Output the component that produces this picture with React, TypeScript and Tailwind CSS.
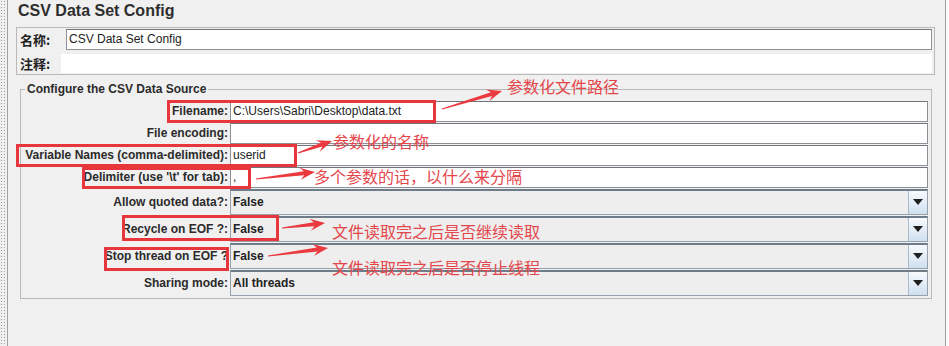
import React from 'react';

const labelFont = "font-['Liberation_Sans','Arial',sans-serif]";
const cjkFont = "font-['Noto_Sans_CJK_SC','Noto_Sans',sans-serif]";

const TextRow = ({ label, value }: { label: string; value?: string }) => (
  <div className="flex items-center h-[22px]">
    <div className={`w-[209px] pr-[2px] text-right text-[12px] font-bold text-[#2b2b2b] ${labelFont}`}>{label}</div>
    <div
      className={`flex-1 h-[21px] bg-white border border-[#8d9197] border-t-[#70757c] px-[2px] text-[12px] leading-[19px] text-[#222] ${labelFont}`}
    >
      {value}
    </div>
  </div>
);

const ComboRow = ({ label, value }: { label: string; value: string }) => (
  <div className="flex items-center h-[27px]">
    <div className={`w-[209px] pr-[2px] text-right text-[12px] font-bold text-[#2b2b2b] ${labelFont}`}>{label}</div>
    <div className="flex-1 h-[26px] flex bg-[#eeeeee] border border-[#96a1ac] border-t-2 border-t-[#6e7c8a]">
      <div className={`flex-1 pl-[2px] text-[12px] font-bold leading-[23px] text-[#222] ${labelFont}`}>{value}</div>
      <div className="w-[19px] flex items-start justify-center pt-[8px] border-l border-[#a9bccd] bg-gradient-to-b from-[#f8fafd] to-[#cfe0f0]">
        <svg width="10" height="6" viewBox="0 0 10 6">
          <path d="M0 0 H10 L5 6 Z" fill="#1f1f1f" />
        </svg>
      </div>
    </div>
  </div>
);

const arrowPoints = (x1: number, y1: number, x2: number, y2: number) => {
  const dx = x2 - x1;
  const dy = y2 - y1;
  const len = Math.sqrt(dx * dx + dy * dy);
  const ux = dx / len;
  const uy = dy / len;
  const nx = -uy;
  const ny = ux;
  const headLen = 15;
  const neck = 11;
  const headW = 6;
  const shaftW = 2;
  const tailW = 0.5;
  const p = (x: number, y: number) => `${x.toFixed(1)},${y.toFixed(1)}`;
  return [
    p(x1 + nx * tailW, y1 + ny * tailW),
    p(x2 - ux * neck + nx * shaftW, y2 - uy * neck + ny * shaftW),
    p(x2 - ux * headLen + nx * headW, y2 - uy * headLen + ny * headW),
    p(x2, y2),
    p(x2 - ux * headLen - nx * headW, y2 - uy * headLen - ny * headW),
    p(x2 - ux * neck - nx * shaftW, y2 - uy * neck - ny * shaftW),
    p(x1 - nx * tailW, y1 - ny * tailW),
  ].join(' ');
};

const arrows = [
  [442, 109, 502, 91],
  [298, 153, 332, 141],
  [256, 179, 315, 172],
  [282, 228, 325, 223],
  [268, 256, 328, 248],
];

const notes = [
  { text: '参数化文件路径', x: 507, y: 77 },
  { text: '参数化的名称', x: 333, y: 132 },
  { text: '多个参数的话，以什么来分隔', x: 314, y: 167 },
  { text: '文件读取完之后是否继续读取', x: 332, y: 222 },
  { text: '文件读取完之后是否停止线程', x: 332, y: 258 },
];

const boxes = [
  'left-[167px] top-[100px] w-[269px] h-[23px]',
  'left-[16px] top-[144px] w-[281px] h-[23px]',
  'left-[82px] top-[167px] w-[169px] h-[22px]',
  'left-[122px] top-[215px] w-[157px] h-[26px]',
  'left-[104px] top-[247px] w-[125px] h-[24px]',
];

export default function App() {
  return (
    <div className="relative w-[949px] h-[346px] overflow-hidden flex bg-[#f0f0f0]">
      <div className="w-[7px] h-full bg-[radial-gradient(circle,#9a9a9a_0.7px,transparent_0.9px)] bg-size-[3px_3px]" />
      <div className="w-[939px] h-full border-l border-r border-[#a0a0a0] bg-[#f0f0f0]">
        <h1 className={`pl-[10px] pt-[1px] text-[16px] leading-[20px] font-bold text-[#2e2e2e] ${labelFont}`}>CSV Data Set Config</h1>

        <div className="ml-[8px] mr-[10px] mt-[6px] border border-[#b9b9b9] pl-[3px] pr-[2px] pt-[1px] pb-[1px]">
          <div className="flex items-center h-[21px]">
            <span className={`w-[46px] text-[13px] font-bold text-[#222] ${cjkFont}`}>名称:</span>
            <div className={`flex-1 h-[21px] bg-white border border-[#8d9197] border-t-[#70757c] px-[2px] text-[12px] leading-[19px] text-[#222] ${labelFont}`}>
              CSV Data Set Config
            </div>
          </div>
          <div className="flex items-center h-[19px] mt-[4px]">
            <span className={`w-[41px] text-[13px] font-bold text-[#222] ${cjkFont}`}>注释:</span>
            <div className="flex-1 h-[19px] bg-white" />
          </div>
        </div>

        <fieldset className="ml-[12px] mr-[13px] mt-[7px] border border-[#b9b9b9] pr-[3px] pb-[2px]">
          <legend className={`ml-[4px] px-[2px] text-[12px] leading-[14px] font-bold text-[#2b2b2b] ${labelFont}`}>
            Configure the CSV Data Source
          </legend>
          <div className="pt-[4px]">
            <TextRow label="Filename:" value="C:\Users\Sabri\Desktop\data.txt" />
            <TextRow label="File encoding:" />
            <TextRow label="Variable Names (comma-delimited):" value="userid" />
            <TextRow label="Delimiter (use '\t' for tab):" value="," />
            <ComboRow label="Allow quoted data?:" value="False" />
            <ComboRow label="Recycle on EOF ?:" value="False" />
            <ComboRow label="Stop thread on EOF ?" value="False" />
            <ComboRow label="Sharing mode:" value="All threads" />
          </div>
        </fieldset>
      </div>
      <div className="flex-1 h-full bg-[#fafafa]" />

      {boxes.map((b) => (
        <div key={b} className={`absolute border-[3px] border-[#e8363d] ${b}`} />
      ))}

      <svg className="absolute inset-0 pointer-events-none" width="949" height="346">
        {arrows.map(([x1, y1, x2, y2], i) => (
          <polygon key={i} points={arrowPoints(x1, y1, x2, y2)} fill="#ea3a3f" />
        ))}
      </svg>

      {notes.map((n) => (
        <div
          key={n.text}
          className={`absolute text-[16px] leading-[18px] text-[#e4474b] whitespace-nowrap ${cjkFont}`}
          style={{ left: n.x, top: n.y }}
        >
          {n.text}
        </div>
      ))}
    </div>
  );
}
